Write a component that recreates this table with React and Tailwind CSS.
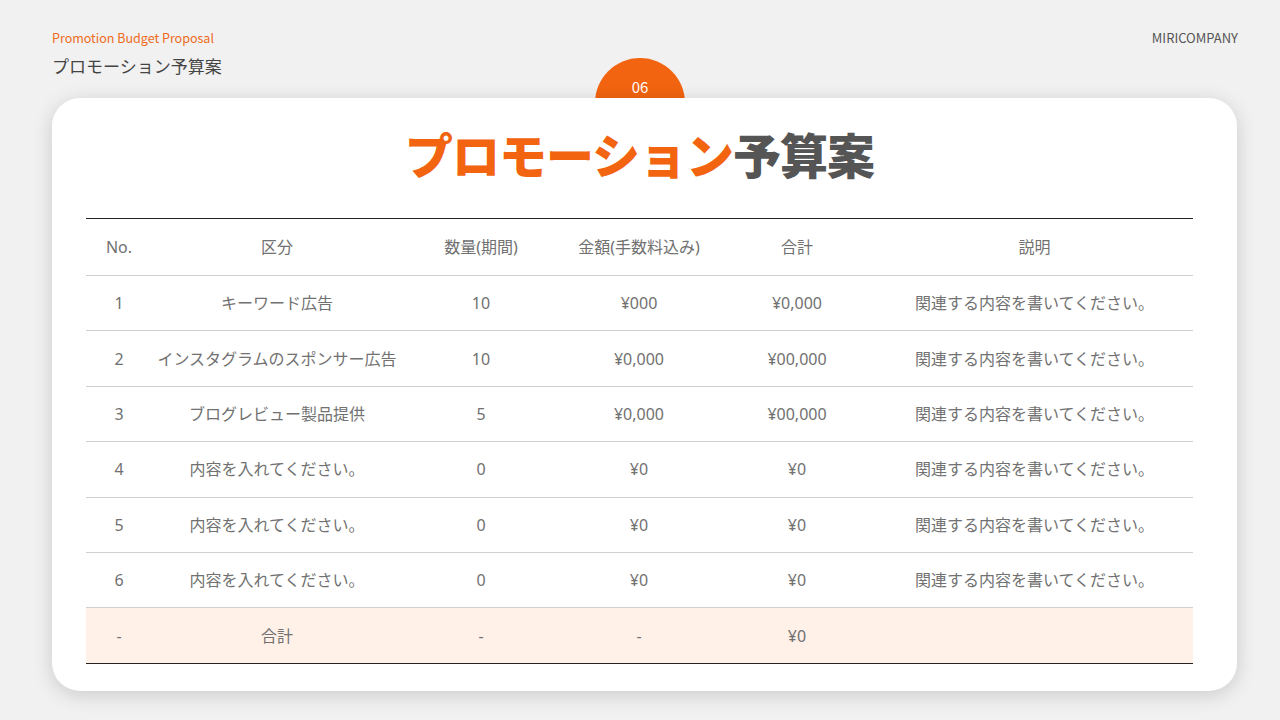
import React from 'react';

const rows = [
  ['1', 'キーワード広告', '10', '¥000', '¥0,000', '関連する内容を書いてください。'],
  ['2', 'インスタグラムのスポンサー広告', '10', '¥0,000', '¥00,000', '関連する内容を書いてください。'],
  ['3', 'ブログレビュー製品提供', '5', '¥0,000', '¥00,000', '関連する内容を書いてください。'],
  ['4', '内容を入れてください。', '0', '¥0', '¥0', '関連する内容を書いてください。'],
  ['5', '内容を入れてください。', '0', '¥0', '¥0', '関連する内容を書いてください。'],
  ['6', '内容を入れてください。', '0', '¥0', '¥0', '関連する内容を書いてください。'],
];

const cols = 'grid grid-cols-[66px_250px_158px_158px_158px_1fr] items-center text-center';

function App() {
  return (
    <div
      className="w-[1280px] h-[720px] bg-[#f1f1f1] relative overflow-hidden text-[#666]"
      style={{ fontFamily: '"Noto Sans CJK JP", "Noto Sans", sans-serif' }}
    >
      {/* header */}
      <div className="flex justify-between items-start h-[98px] pl-[52px] pr-[42px] pt-[30px]">
        <div>
          <p className="text-[12.5px] leading-[16px] text-[#ee6b1c]">Promotion Budget Proposal</p>
          <p className="text-[17px] leading-[20px] text-[#444] mt-[10px]">プロモーション予算案</p>
        </div>
        <p className="text-[13px] leading-[16px] text-[#555]">MIRICOMPANY</p>
      </div>

      {/* page badge */}
      <div className="absolute left-[595px] top-[58px] w-[90px] h-[90px] rounded-full bg-[#f26410] flex justify-center">
        <span className="text-white text-[15px] leading-[20px] mt-[19px]">06</span>
      </div>

      {/* card */}
      <div className="relative ml-[52px] w-[1185px] h-[593px] bg-white rounded-[28px] shadow-[0_4px_20px_rgba(0,0,0,0.16)] pl-[34px] pr-[44px] pt-[23px]">
        <h1 className="text-center text-[48px] leading-[64px] font-black tracking-[-1px]">
          <span className="text-[#f26410]">プロモーション</span>
          <span className="text-[#555]">予算案</span>
        </h1>

        <div
          className="mt-[33px] border-t border-[#222] text-[16px] text-[#717171]"
          style={{ fontFamily: '"Noto Sans", "Noto Sans CJK JP", sans-serif' }}
        >
          <div className={`${cols} h-[57px] border-b border-[#d0d0d0]`}>
            <div>No.</div>
            <div>区分</div>
            <div>数量(期間)</div>
            <div>金額(手数料込み)</div>
            <div>合計</div>
            <div>説明</div>
          </div>
          {rows.map((r) => (
            <div key={r[0]} className={`${cols} h-[55.4px] border-b border-[#d0d0d0]`}>
              {r.map((c, i) => (
                <div key={i}>{c}</div>
              ))}
            </div>
          ))}
          <div className={`${cols} h-[55.4px] bg-[#fff0e8] border-b border-[#222]`}>
            <div>-</div>
            <div>合計</div>
            <div>-</div>
            <div>-</div>
            <div>¥0</div>
            <div></div>
          </div>
        </div>
      </div>
    </div>
  );
}

export default App;
